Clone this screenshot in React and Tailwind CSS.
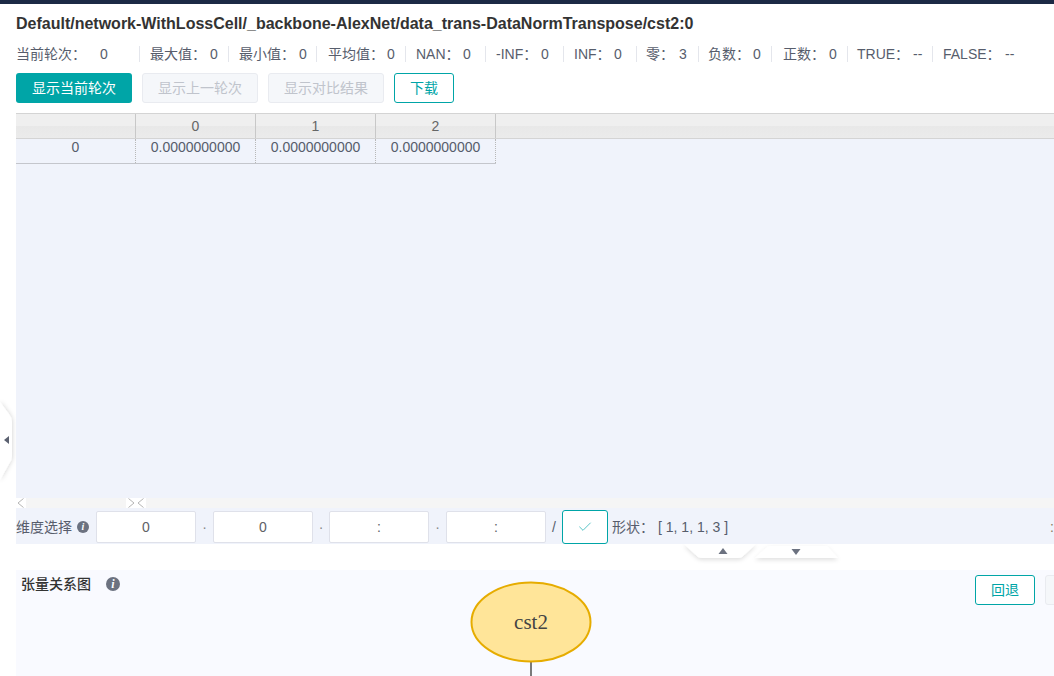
import { Check } from "lucide-react";

const SANS = "font-['Liberation_Sans','Noto_Sans_CJK_SC',sans-serif]";

const stats = [
  { label: "当前轮次：", value: "0", cls: "w-[124px]", gap: "w-[84px]" },
  { label: "最大值：", value: "0", cls: "w-[89px] pl-[10px]", gap: "w-[60px]" },
  { label: "最小值：", value: "0", cls: "w-[88px] pl-[10px]", gap: "w-[60px]" },
  { label: "平均值：", value: "0", cls: "w-[89px] pl-[11px]", gap: "w-[59px]" },
  { label: "NAN：", value: "0", cls: "w-[80px] pl-[10px]", gap: "w-[47px]" },
  { label: "-INF：", value: "0", cls: "w-[78px] pl-[10px]", gap: "w-[45px]" },
  { label: "INF：", value: "0", cls: "w-[73px] pl-[10px]", gap: "w-[40px]" },
  { label: "零：", value: "3", cls: "w-[62px] pl-[9px]", gap: "w-[33px]" },
  { label: "负数：", value: "0", cls: "w-[73px] pl-[9px]", gap: "w-[45px]" },
  { label: "正数：", value: "0", cls: "w-[76px] pl-[11px]", gap: "w-[46px]" },
  { label: "TRUE：", value: "--", cls: "w-[85px] pl-[9px]", gap: "w-[56px]" },
  { label: "FALSE：", value: "--", cls: "w-[90px] pl-[10px] border-r-0", gap: "w-[62px]" },
];

function InfoDot({ className }) {
  return (
    <span className={`flex items-center justify-center rounded-full bg-[#6c7280] text-white font-bold italic font-['Liberation_Serif',serif] leading-none ${className}`}>
      i
    </span>
  );
}

function Chevron({ dir }) {
  return (
    <svg width="10" height="10" viewBox="0 0 10 10" fill="none" stroke="#b5b5b5" strokeWidth="1">
      <path d={dir === "left" ? "M7.5 0.5 L2 5 L7.5 9.5" : "M2.5 0.5 L8 5 L2.5 9.5"} />
    </svg>
  );
}

function DimInput({ value, colon }) {
  return (
    <div className="w-[100px] h-8 bg-white border border-[#dfe1ea] rounded-[2px] flex items-center justify-center text-[14px] text-[#606266]">
      {colon ? ":" : value}
    </div>
  );
}

export default function App() {
  return (
    <div className={`relative w-[1054px] h-[676px] overflow-hidden bg-white text-[#333] ${SANS}`}>
      <div className="h-1 bg-[#1c2a45]" />

      <div className="pl-4">
        <h1 className="h-[41px] pt-[11px] text-[16px] leading-[18px] font-bold text-[#333] whitespace-nowrap">
          Default/network-WithLossCell/_backbone-AlexNet/data_trans-DataNormTranspose/cst2:0
        </h1>

        {/* Stats */}
        <div className="flex items-center h-4 mt-px text-[14px] text-[#575d6c] whitespace-nowrap">
          {stats.map((s) => (
            <div
              key={s.label}
              className={`flex shrink-0 h-4 items-center border-r border-[#e4e6ec] ${s.cls}`}
            >
              <span className={`${s.gap} shrink-0`}>{s.label}</span>
              <span>{s.value}</span>
            </div>
          ))}
        </div>

        {/* Actions */}
        <div className="flex gap-[10px] mt-[11px] text-[14px]">
          <button className="w-[116px] h-[30px] rounded-[3px] bg-[#00a5a7] text-white">显示当前轮次</button>
          <button className="w-[116px] h-[30px] rounded-[3px] bg-[#f5f7fa] border border-[#e9ebf0] text-[#c0c4cc]">显示上一轮次</button>
          <button className="w-[116px] h-[30px] rounded-[3px] bg-[#f5f7fa] border border-[#e9ebf0] text-[#c0c4cc]">显示对比结果</button>
          <button className="w-[60px] h-[30px] rounded-[3px] bg-white border border-[#00a5a7] text-[#00a5a7]">下载</button>
        </div>

        {/* Tensor grid */}
        <div className="mt-[10px] h-[385px] bg-[#f0f3fb] text-[14px] text-[#575d6c]">
          <div className="flex h-[26px] border-t border-b border-[#d4d4d4] bg-[linear-gradient(#efefef_0%,#efefef_50%,#e8e8e8_50%,#ebebeb_100%)]">
            <div className="w-[120px] border-r border-[#c8c8c8]" />
            {["0", "1", "2"].map((h) => (
              <div key={h} className="w-[120px] border-r border-[#c8c8c8] flex items-center justify-center pt-px text-[#666]">
                {h}
              </div>
            ))}
          </div>
          <div className="flex w-[480px] h-[25px] border-b border-[#c4c6cc]">
            <div className="w-[120px] border-r border-dotted border-[#b8b8b8] text-center leading-[17px]">0</div>
            {[0, 1, 2].map((c) => (
              <div key={c} className="w-[120px] border-r border-dotted border-[#b8b8b8] text-center leading-[17px]">
                0.0000000000
              </div>
            ))}
          </div>
        </div>

        {/* Grid scrollbar */}
        <div className="flex h-[10px] bg-[#f5f5f5]">
          <div className="w-[10px] bg-white"><Chevron dir="left" /></div>
          <div className="w-[100px]" />
          <div className="w-[10px] bg-white"><Chevron dir="right" /></div>
          <div className="w-[10px] bg-white"><Chevron dir="left" /></div>
        </div>

        {/* Dimension selection */}
        <div className="flex items-center h-9 pt-[2px] bg-[#f0f3fb] text-[14px] text-[#575d6c] whitespace-nowrap">
          <span className="w-[60px] pt-px">维度选择</span>
          <InfoDot className="ml-px w-3 h-3 text-[10px]" />
          <div className="flex items-center ml-[7px]">
            <DimInput value="0" />
            <span className="w-[17px] text-center text-[#888]">·</span>
            <DimInput value="0" />
            <span className="w-4 text-center text-[#888]">·</span>
            <DimInput colon />
            <span className="w-[17px] text-center text-[#888]">·</span>
            <DimInput colon />
          </div>
          <span className="w-4 text-center">/</span>
          <button className="w-[46px] h-[34px] rounded-[3px] bg-white border border-[#00a5a7] flex items-center justify-center">
            <Check size={16} strokeWidth={1} className="text-[#00a5a7]" />
          </button>
          <span className="ml-1 w-[46px] pt-px">形状：</span>
          <span className="pt-px">[ 1, 1, 1, 3 ]</span>
          <span className="ml-auto text-[#8a7a5a]">:</span>
        </div>

        {/* Tensor relation graph */}
        <div className="relative mt-[26px] h-[106px] bg-[#f9faff]">
          <div className="flex items-center pl-[5px] pt-[4px] text-[14px] font-medium text-[#333]">
            <span className="w-[85px]">张量关系图</span>
            <InfoDot className="w-[14px] h-[14px] text-[12px] -mt-px" />
          </div>
          <div className="absolute left-[959px] top-[5px] flex gap-[10px] text-[14px]">
            <button className="w-[60px] h-[30px] rounded-[3px] bg-white border border-[#00a5a7] text-[#00a5a7]">回退</button>
            <button className="w-[60px] h-[30px] rounded-[3px] bg-[#f5f7fa] border border-[#e9ebf0]" />
          </div>
          <svg className="absolute left-[450px] top-[10px]" width="130" height="96" viewBox="0 0 130 96">
            <path d="M65 82 V96" stroke="#7a7a7a" strokeWidth="2" />
            <ellipse cx="65" cy="42" rx="59.5" ry="39.5" fill="#ffe599" stroke="#e6ac00" strokeWidth="2" />
            <text x="65" y="49" textAnchor="middle" fontSize="21" fill="#444" fontFamily="'Liberation Serif', serif">cst2</text>
          </svg>
        </div>
      </div>

      {/* Left panel handle */}
      <svg className="absolute left-0 top-[396px]" width="16" height="90" viewBox="0 0 16 90">
        <defs>
          <filter id="handleShadow" x="-60%" y="-20%" width="220%" height="140%">
            <feDropShadow dx="0" dy="0" stdDeviation="2.5" floodColor="#000" floodOpacity="0.2" />
          </filter>
        </defs>
        <path d="M0 6 L9 18 Q12 22 12 26 V60 Q12 64 9 68 L0 84 Z" fill="#fff" filter="url(#handleShadow)" />
        <path d="M4 44 L9 40 V48 Z" fill="#5b6170" />
      </svg>

      {/* Collapse tabs */}
      <svg className="absolute left-[680px] top-[544px]" width="165" height="22" viewBox="0 0 165 22">
        <defs>
          <filter id="tabShadow" x="-10%" y="-30%" width="120%" height="190%">
            <feDropShadow dx="0" dy="2" stdDeviation="2" floodColor="#000" floodOpacity="0.12" />
          </filter>
        </defs>
        <path d="M4 0 H76 L62 13 Q60 14 58 14 H22 Q20 14 18 13 Z" fill="#fff" filter="url(#tabShadow)" />
        <path d="M90 2 H145 Q147 2 148 3 L158 14 H75 L86 4 Q88 2 90 2 Z" fill="#fff" filter="url(#tabShadow)" />
        <path d="M43 4 L47.5 10 H38.5 Z" fill="#6c7280" />
        <path d="M111.500 5 H120.500 L116 11 Z" fill="#6c7280" />
      </svg>
    </div>
  );
}
